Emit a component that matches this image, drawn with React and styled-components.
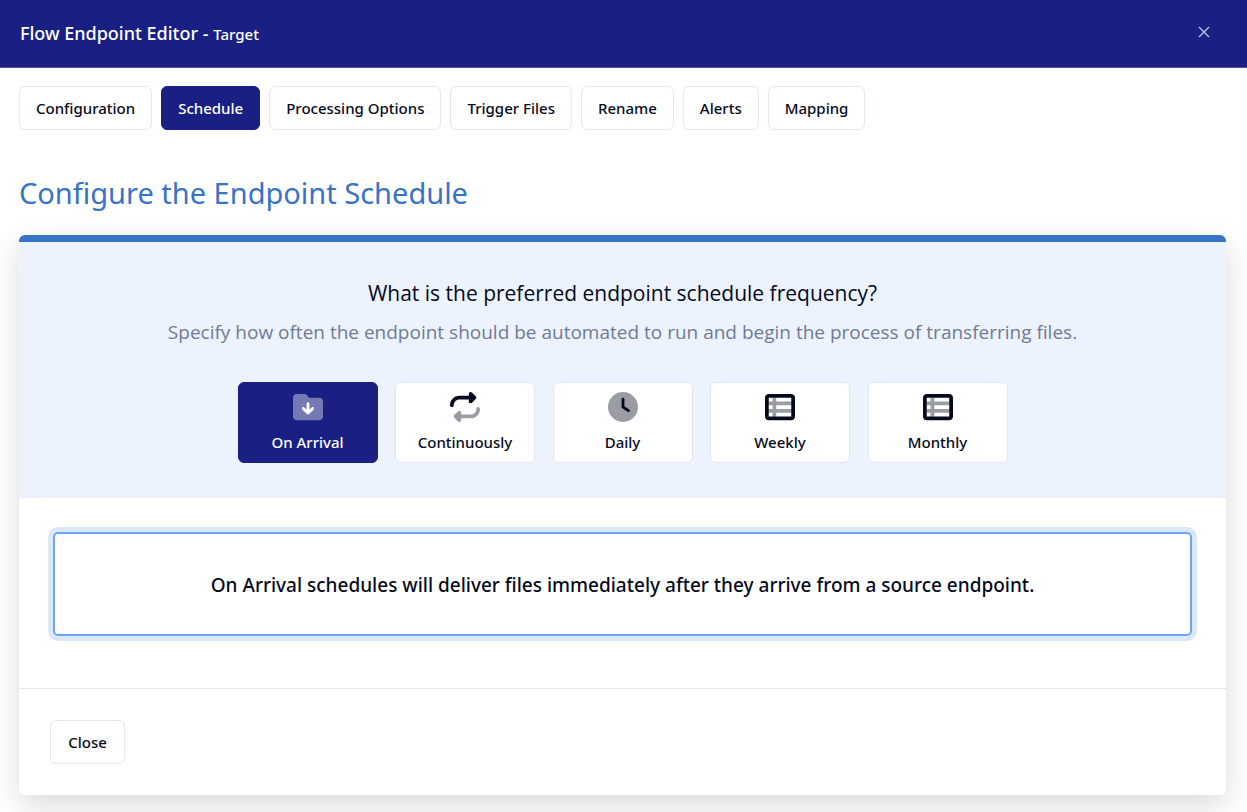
import React, { useState } from "react";
import styled, { createGlobalStyle, css } from "styled-components";

const navy = "#1a2083";
const ink = "#060a1c";
const line = "#e2e7f2";
const copyFont = `"Segoe UI", "Open Sans", "Noto Sans", sans-serif`;

const GlobalStyle = createGlobalStyle`
  *, *::before, *::after { box-sizing: border-box; }
  body {
    margin: 0;
    background: #fff;
    color: ${ink};
    font-family: "Segoe UI", "Noto Sans", "Open Sans", sans-serif;
    font-size: 15px;
    line-height: 24px;
  }
  button { font-family: inherit; cursor: pointer; }
`;

const Header = styled.header`
  display: flex;
  align-items: flex-start;
  justify-content: space-between;
  height: 68px;
  padding: 21px 32px 0 20px;
  background: ${navy};
  border-bottom: 1px solid #4a4fa0;
  color: #fff;
`;

const Title = styled.h1`
  margin: 0;
  font-size: 18px;
  font-weight: 500;
  line-height: 24px;
`;

const TitleNote = styled.small`
  font-size: 15px;
  font-weight: 500;
`;

const CloseIcon = styled.button`
  display: grid;
  place-items: center;
  width: 22px;
  height: 22px;
  padding: 0;
  border: 0;
  background: none;
  color: #c3c5e2;
`;

const Main = styled.main`
  padding: 18px 21px 17px 19px;
`;

const Tabs = styled.nav`
  display: flex;
  flex-wrap: wrap;
  gap: 9px;
`;

const outlined = css`
  border: 1px solid ${(p) => (p.$active ? navy : line)};
  border-radius: 6px;
  background: ${(p) => (p.$active ? navy : "#fff")};
  color: ${(p) => (p.$active ? "#fff" : ink)};
  font-size: 15px;
  font-weight: 500;
  line-height: 24px;
`;

const Button = styled.button`
  ${outlined}
  min-width: 75px;
  height: 44px;
  padding: 0 16px;
`;

const Heading = styled.h2`
  margin: 41px 0 21px;
  color: #3873c8;
  font-size: 29px;
  font-weight: 400;
  line-height: 43px;
`;

const Card = styled.section`
  border-top: 7px solid #3873c8;
  border-radius: 6px;
  background: #fff;
  box-shadow: 0 10px 30px rgba(0, 0, 0, 0.15);
`;

const Question = styled.div`
  padding: 35px 32px 35px;
  background: #ecf3fe;
  text-align: center;
`;

const Prompt = styled.h3`
  margin: 0;
  font-family: ${copyFont};
  font-size: 21px;
  font-weight: 400;
  line-height: 32px;
`;

const Help = styled.p`
  margin: 7px 0 34px;
  color: #717b92;
  font-family: ${copyFont};
  font-size: 19px;
  line-height: 32px;
`;

const Choices = styled.div`
  display: flex;
  justify-content: space-between;
  max-width: 770px;
  margin: 0 auto;
`;

const Choice = styled.button`
  ${outlined}
  display: flex;
  flex-direction: column;
  align-items: center;
  justify-content: flex-start;
  gap: 8px;
  width: 140px;
  height: 81px;
  padding: 9px 0 7px;
`;

const Body = styled.div`
  padding: 34px 34px 52px;
`;

const Notice = styled.p`
  margin: 0;
  padding: 37px 24px 35px;
  border: 2px solid #6fa5f0;
  border-radius: 5px;
  box-shadow: 0 0 0 5px #dbe8fb;
  font-size: 19px;
  font-weight: 500;
  line-height: 28px;
  text-align: center;
`;

const Footer = styled.footer`
  padding: 31px;
  border-top: 1px solid ${line};
`;

const Glyph = ({ children }) => (
  <svg width="30" height="30" viewBox="0 0 512 512" fill="currentColor" aria-hidden="true">
    {children}
  </svg>
);

const FolderIcon = () => (
  <Glyph>
    <path opacity=".4" d="M64 480H448c35.300 0 64-28.700 64-64V160c0-35.300-28.700-64-64-64H288c-10.100 0-19.600-4.700-25.600-12.800L243.200 57.600C231.100 41.500 212.100 32 192 32H64C28.700 32 0 60.700 0 96V416c0 35.300 28.700 64 64 64z" />
    <path d="M256 176c13.300 0 24 10.700 24 24V302l39-39c9.400-9.400 24.600-9.400 33.900 0s9.400 24.600 0 33.900l-80 80c-9.400 9.400-24.600 9.400-33.900 0l-80-80c-9.400-9.400-9.400-24.600 0-33.900s24.600-9.400 33.900 0l39 39V200c0-13.300 10.700-24 24-24z" />
  </Glyph>
);

const RepeatIcon = () => (
  <Glyph>
    <path d="M0 224c0 17.700 14.300 32 32 32s32-14.300 32-32c0-53 43-96 96-96H320v32c0 12.900 7.800 24.600 19.800 29.600s25.700 2.200 34.900-6.900l64-64c12.500-12.500 12.500-32.800 0-45.300l-64-64c-9.200-9.200-22.900-11.900-34.900-6.900S320 19.100 320 32V64H160C71.600 64 0 135.600 0 224z" />
    <path opacity=".4" d="M512 288c0-17.700-14.300-32-32-32s-32 14.300-32 32c0 53-43 96-96 96H192V352c0-12.900-7.800-24.600-19.800-29.600s-25.700-2.200-34.900 6.900l-64 64c-12.500 12.500-12.500 32.800 0 45.300l64 64c9.200 9.200 22.900 11.900 34.900 6.900s19.800-16.600 19.800-29.600V448H352c88.400 0 160-71.600 160-160z" />
  </Glyph>
);

const ClockIcon = () => (
  <Glyph>
    <circle opacity=".4" cx="256" cy="256" r="256" />
    <path d="M256 96c13.300 0 24 10.700 24 24V243.200l82.700 55.100c11 7.400 14 22.300 6.700 33.300s-22.300 14-33.300 6.700L242.700 276c-6.700-4.500-10.700-12-10.700-20V120c0-13.300 10.700-24 24-24z" />
  </Glyph>
);

const TableIcon = () => (
  <Glyph>
    <path opacity=".4" d="M56 160H128V94H192V160H456V224H192V288H456V352H192V422H128V352H56V288H128V224H56z" />
    <path fillRule="evenodd" d="M64 32C28.700 32 0 60.700 0 96V416c0 35.300 28.700 64 64 64H448c35.300 0 64-28.700 64-64V96c0-35.300-28.700-64-64-64zM64 96H448V416H64z" />
  </Glyph>
);

const tabs = ["Configuration", "Schedule", "Processing Options", "Trigger Files", "Rename", "Alerts", "Mapping"];

const frequencies = [
  ["On Arrival", FolderIcon],
  ["Continuously", RepeatIcon],
  ["Daily", ClockIcon],
  ["Weekly", TableIcon],
  ["Monthly", TableIcon],
];

export default function App() {
  const [tab, setTab] = useState("Schedule");
  const [frequency, setFrequency] = useState("On Arrival");

  return (
    <>
      <GlobalStyle />
      <Header>
        <Title>
          Flow Endpoint Editor - <TitleNote>Target</TitleNote>
        </Title>
        <CloseIcon type="button" aria-label="Close editor">
          <svg width="12" height="12" viewBox="0 0 12 12" stroke="currentColor" strokeWidth="1.300" aria-hidden="true">
            <path d="M1 1 11 11M11 1 1 11" />
          </svg>
        </CloseIcon>
      </Header>
      <Main>
        <Tabs>
          {tabs.map((name) => (
            <Button key={name} type="button" $active={name === tab} onClick={() => setTab(name)}>
              {name}
            </Button>
          ))}
        </Tabs>
        <Heading>Configure the Endpoint Schedule</Heading>
        <Card>
          <Question>
            <Prompt>What is the preferred endpoint schedule frequency?</Prompt>
            <Help>Specify how often the endpoint should be automated to run and begin the process of transferring files.</Help>
            <Choices>
              {frequencies.map(([name, Icon]) => (
                <Choice key={name} type="button" $active={name === frequency} onClick={() => setFrequency(name)}>
                  <Icon />
                  {name}
                </Choice>
              ))}
            </Choices>
          </Question>
          <Body>
            <Notice>On Arrival schedules will deliver files immediately after they arrive from a source endpoint.</Notice>
          </Body>
          <Footer>
            <Button type="button">Close</Button>
          </Footer>
        </Card>
      </Main>
    </>
  );
}
